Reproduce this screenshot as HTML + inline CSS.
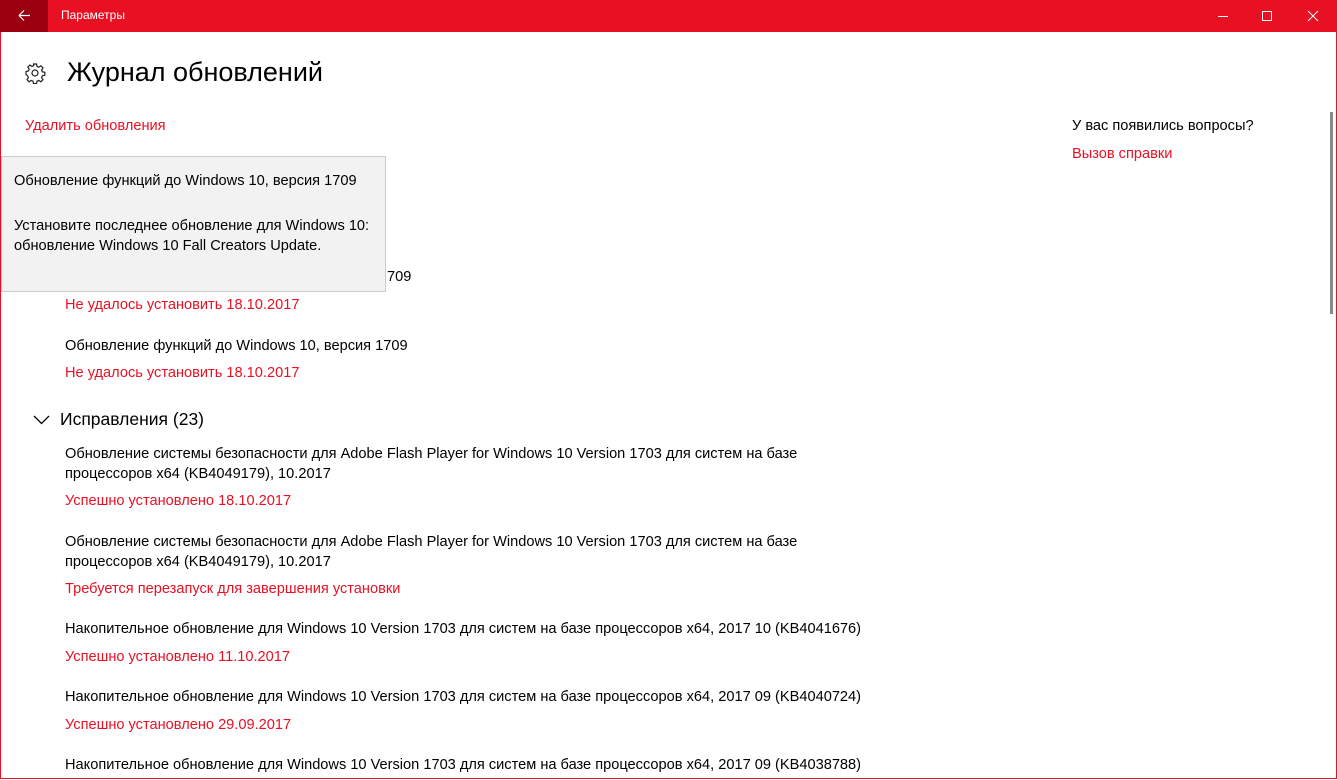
<!DOCTYPE html>
<html><head><meta charset="utf-8"><style>
body{margin:0;width:1337px;height:780px;overflow:hidden;background:#fff;font-family:"Liberation Sans","DejaVu Sans",sans-serif;position:relative;color:#000}
.win{position:absolute;left:0;top:0;width:1335px;height:778px;border:1px solid #e81123;border-top:none}
.tb{position:absolute;left:0;top:0;width:1337px;height:32px;background:#e81123;color:#fff}
.back{position:absolute;left:0;top:0;width:48px;height:32px;background:#9b0010}
.t{position:absolute;font-size:14.6px;white-space:nowrap}
.r{color:#e81123}
</style></head><body>
<div class="win"></div>
<div class="tb">
 <div class="back"><svg width="48" height="32"><path d="M19 15.5h11M19 15.5l5-5M19 15.5l5 5" stroke="#fff" stroke-width="1.2" fill="none"/></svg></div>
 <div class="t" style="left:61px;top:8px;font-size:12px;color:#fff">Параметры</div>
 <svg style="position:absolute;left:1200px;top:0" width="137" height="32"><path d="M18 16.5h10" stroke="#fff"/><path d="M62.5 11.5h9v9h-9z" stroke="#fff" fill="none"/><path d="M108 11l10 10M118 11l-10 10" stroke="#fff"/></svg>
</div>
<svg style="position:absolute;left:24px;top:62px" width="22" height="22" viewBox="0 0 22 22"><g fill="none" stroke="#222" stroke-width="1.2"><circle cx="11" cy="11" r="3"/><path d="M9.5 2h3l.5 2.4 1.8.8 2.1-1.4 2.1 2.1-1.4 2.1.8 1.8 2.4.5v3l-2.4.5-.8 1.8 1.4 2.1-2.1 2.1-2.1-1.4-1.8.8-.5 2.4h-3l-.5-2.4-1.8-.8-2.1 1.4-2.1-2.1 1.4-2.1-.8-1.8L2 12.5v-3l2.4-.5.8-1.8-1.4-2.1 2.1-2.1 2.1 1.4 1.8-.8z"/></g></svg>
<div class="t" style="left:67px;top:57px;font-size:27px">Журнал обновлений</div>
<div class="t r" style="left:25px;top:118px">Удалить обновления</div>
<div class="t" style="left:1072px;top:118px">У вас появились вопросы?</div>
<div class="t r" style="left:1072px;top:146px">Вызов справки</div>
<div style="position:absolute;left:1330px;top:112px;width:3px;height:202px;background:#8a8a8a"></div>

<div class="t" style="left:65px;top:338px">Обновление функций до Windows 10, версия 1709</div>
<div class="t r" style="left:65px;top:297px">Не удалось установить 18.10.2017</div>
<div class="t r" style="left:65px;top:365px">Не удалось установить 18.10.2017</div>

<svg style="position:absolute;left:33px;top:414px" width="18" height="12"><path d="M1 2l7.5 7.5L16 2" stroke="#000" stroke-width="1.3" fill="none"/></svg>
<div class="t" style="left:60px;top:409px;font-size:17.5px">Исправления (23)</div>

<div class="t" style="left:65px;top:444px;line-height:20px">Обновление системы безопасности для Adobe Flash Player for Windows 10 Version 1703 для систем на базе<br>процессоров x64 (KB4049179), 10.2017</div>
<div class="t r" style="left:65px;top:493px">Успешно установлено 18.10.2017</div>
<div class="t" style="left:65px;top:532px;line-height:20px">Обновление системы безопасности для Adobe Flash Player for Windows 10 Version 1703 для систем на базе<br>процессоров x64 (KB4049179), 10.2017</div>
<div class="t r" style="left:65px;top:581px">Требуется перезапуск для завершения установки</div>
<div class="t" style="left:65px;top:621px">Накопительное обновление для Windows 10 Version 1703 для систем на базе процессоров x64, 2017 10 (KB4041676)</div>
<div class="t r" style="left:65px;top:649px">Успешно установлено 11.10.2017</div>
<div class="t" style="left:65px;top:689px">Накопительное обновление для Windows 10 Version 1703 для систем на базе процессоров x64, 2017 09 (KB4040724)</div>
<div class="t r" style="left:65px;top:717px">Успешно установлено 29.09.2017</div>
<div class="t" style="left:65px;top:757px">Накопительное обновление для Windows 10 Version 1703 для систем на базе процессоров x64, 2017 09 (KB4038788)</div>

<div class="t" style="left:387px;top:269px">709</div>
<div style="position:absolute;left:1px;top:156px;width:383px;height:134px;background:#f2f2f2;border:1px solid #ccc">
 <div class="t" style="left:12px;top:16px">Обновление функций до Windows 10, версия 1709</div>
 <div class="t" style="left:12px;top:59px;line-height:20px">Установите последнее обновление для Windows 10:<br>обновление Windows 10 Fall Creators Update.</div>
</div>
</body></html>
